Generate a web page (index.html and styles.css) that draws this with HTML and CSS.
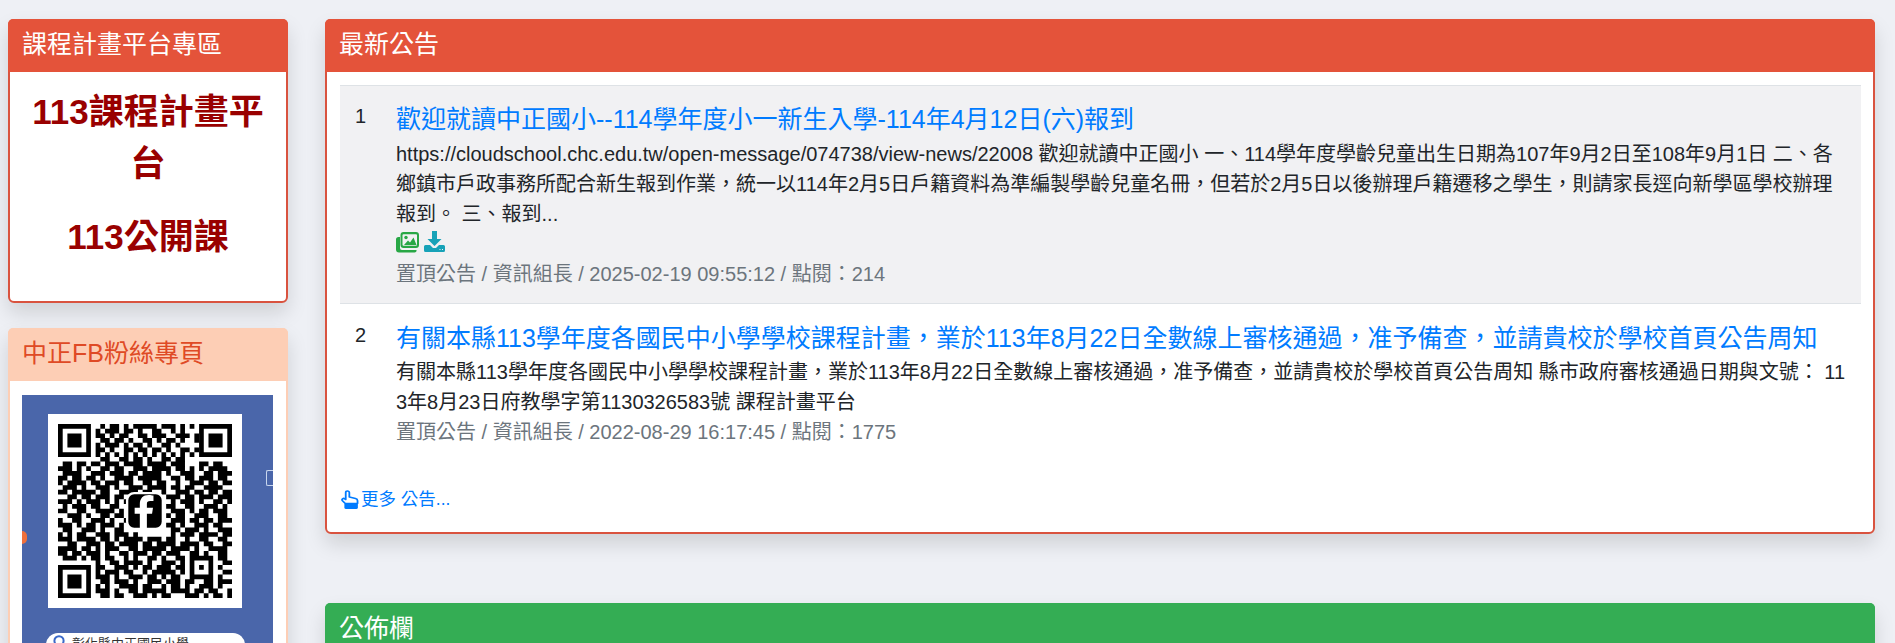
FILE: index.html
```html
<!DOCTYPE html>
<html lang="zh-Hant">
<head>
<meta charset="utf-8">
<title>中正國小</title>
<link rel="stylesheet" href="styles.css">
</head>
<body>
<div class="page">
  <aside class="sidebar">
    <section class="card card-red">
      <h2 class="card-head head-red">課程計畫平台專區</h2>
      <div class="promo">
        <p class="promo-line">113課程計畫平台</p>
        <p class="promo-line">113公開課</p>
      </div>
    </section>
    <section class="card card-peach">
      <h2 class="card-head head-peach">中正FB粉絲專頁</h2>
      <div class="poster-wrap">
        <div class="poster">
          <span class="edge-dot"></span>
          <span class="edge-box"></span>
          <div class="qr">
            <svg class="qr-code" viewBox="0 0 37 37" aria-hidden="true">
              <path fill="none" stroke="#000" d="M.5 .5h6v6h-6zM30.500 .5h6v6h-6zM.5 30.500h6v6h-6z"/>
              <path d="M2 2h3v3H2zM32 2h3v3h-3zM2 32h3v3H2z"/>
              <path fill="none" stroke="#000" d="M9 .5h1M11 .5h2M14 .5h1M16 .5h3M19 .5h2M22 .5h3M26 .5h1M28 .5h1M8 1.500h1M10 1.500h3M14 1.500h2M17 1.500h1M20 1.500h2M24 1.500h1M26 1.500h1M8 2.500h2M11 2.500h1M13 2.500h2M17 2.500h2M20 2.500h3M25 2.500h3M29 2.500h1M9 3.500h2M12 3.500h2M15 3.500h1M18 3.500h2M21 3.500h1M23 3.500h2M26 3.500h1M29 3.500h1M8 4.500h1M10 4.500h3M14 4.500h1M16 4.500h2M19 4.500h1M22 4.500h2M25 4.500h1M8 5.500h2M11 5.500h1M14 5.500h2M17 5.500h2M20 5.500h2M23 5.500h1M26 5.500h2M29 5.500h1M8 6.500h1M10 6.500h1M12 6.500h1M14 6.500h1M16 6.500h1M18 6.500h1M20 6.500h1M22 6.500h1M24 6.500h1M26 6.500h1M28 6.500h1M9 7.500h2M13 7.500h2M16 7.500h2M19 7.500h1M22 7.500h2M25 7.500h2M1 8.500h2M4 8.500h2M7 8.500h2M10 8.500h3M14 8.500h4M19 8.500h4M24 8.500h3M30 8.500h2M33 8.500h2M0 9.500h3M4 9.500h1M6 9.500h1M9 9.500h2M12 9.500h2M16 9.500h3M20 9.500h4M25 9.500h2M28 9.500h1M30 9.500h1M32 9.500h4M1 10.500h4M7 10.500h3M11 10.500h3M15 10.500h2M18 10.500h4M23 10.500h1M26 10.500h3M31 10.500h2M34 10.500h3M0 11.500h2M3 11.500h2M6 11.500h2M9 11.500h1M12 11.500h4M17 11.500h5M24 11.500h2M27 11.500h2M30 11.500h3M34 11.500h2M0 12.500h1M2 12.500h4M7 12.500h2M10 12.500h3M14 12.500h2M18 12.500h2M21 12.500h2M25 12.500h1M28 12.500h3M32 12.500h2M35 12.500h2M1 13.500h3M5 13.500h1M8 13.500h3M12 13.500h1M15 13.500h3M19 13.500h4M24 13.500h2M27 13.500h2M31 13.500h4M0 14.500h2M3 14.500h5M9 14.500h2M13 14.500h4M18 14.500h2M22 14.500h1M25 14.500h3M29 14.500h2M32 14.500h2M35 14.500h2M2 15.500h2M5 15.500h2M8 15.500h3M12 15.500h2M15 15.500h1M23 15.500h3M27 15.500h2M30 15.500h3M34 15.500h3M0 16.500h3M4 16.500h1M6 16.500h3M10 16.500h1M12 16.500h1M14 16.500h1M24 16.500h1M26 16.500h3M30 16.500h1M33 16.500h2M36 16.500h1M1 17.500h1M3 17.500h3M7 17.500h2M11 17.500h2M23 17.500h2M27 17.500h2M31 17.500h3M35 17.500h1M0 18.500h2M4 18.500h2M8 18.500h4M13 18.500h1M24 18.500h3M28 18.500h1M30 18.500h2M33 18.500h3M2 19.500h3M6 19.500h1M9 19.500h2M12 19.500h2M23 19.500h1M25 19.500h2M29 19.500h3M34 19.500h2M0 20.500h1M3 20.500h2M7 20.500h3M11 20.500h1M14 20.500h1M24 20.500h3M28 20.500h2M31 20.500h2M34 20.500h3M0 21.500h3M4 21.500h1M6 21.500h2M9 21.500h3M13 21.500h1M23 21.500h2M26 21.500h1M29 21.500h3M33 21.500h2M1 22.500h2M5 22.500h3M9 22.500h1M12 22.500h2M24 22.500h2M27 22.500h3M31 22.500h1M34 22.500h3M0 23.500h1M2 23.500h1M4 23.500h2M8 23.500h3M12 23.500h3M16 23.500h1M24 23.500h1M26 23.500h3M30 23.500h4M35 23.500h2M0 24.500h3M4 24.500h4M9 24.500h2M12 24.500h1M14 24.500h4M19 24.500h3M23 24.500h2M27 24.500h1M30 24.500h2M34 24.500h2M2 25.500h2M6 25.500h3M10 25.500h2M13 25.500h4M18 25.500h2M21 25.500h4M26 25.500h4M31 25.500h2M35 25.500h2M0 26.500h4M5 26.500h2M8 26.500h1M10 26.500h3M15 26.500h2M18 26.500h5M24 26.500h4M29 26.500h1M32 26.500h4M0 27.500h2M3 27.500h2M6 27.500h3M10 27.500h1M13 27.500h2M16 27.500h3M20 27.500h2M23 27.500h3M28 27.500h2M31 27.500h1M34 27.500h2M1 28.500h3M5 28.500h1M7 28.500h2M10 28.500h2M14 28.500h1M16 28.500h1M19 28.500h2M22 28.500h1M25 28.500h2M28 28.500h5M34 28.500h2M8 29.500h1M11 29.500h2M14 29.500h4M19 29.500h1M22 29.500h3M26 29.500h1M28 29.500h1M32 29.500h1M35 29.500h2M8 30.500h2M12 30.500h3M16 30.500h1M18 30.500h2M21 30.500h3M25 30.500h2M28 30.500h1M30 30.500h1M32 30.500h1M34 30.500h1M8 31.500h1M10 31.500h3M14 31.500h2M18 31.500h1M20 31.500h5M26 31.500h1M28 31.500h1M32 31.500h1M35 31.500h2M8 32.500h3M12 32.500h1M15 32.500h3M19 32.500h2M22 32.500h1M24 32.500h2M28 32.500h5M34 32.500h1M9 33.500h2M12 33.500h3M16 33.500h1M19 33.500h3M23 33.500h3M27 33.500h2M31 33.500h2M34 33.500h3M8 34.500h1M10 34.500h1M13 34.500h4M18 34.500h2M22 34.500h1M24 34.500h2M27 34.500h1M30 34.500h3M34 34.500h1M8 35.500h3M12 35.500h1M15 35.500h2M18 35.500h5M24 35.500h4M29 35.500h2M32 35.500h2M36 35.500h1M9 36.500h2M12 36.500h2M16 36.500h3M20 36.500h1M22 36.500h2M27 36.500h3M31 36.500h1M33 36.500h2M36 36.500h1"/>
              <rect x="14.700" y="14.700" width="7.600" height="7.600" rx="1.500" stroke="#fff" stroke-width=".5"/>
              <path fill="#fff" d="M18.900 22.300v-3.200h1.100l.2-1.300h-1.300v-.8c0-.4.200-.6.700-.6h.7v-1.200c-.3 0-.6-.1-1-.1-1.200 0-1.900.7-1.900 1.900v.8h-1.100v1.300h1.100v3.200z"/>
            </svg>
          </div>
          <div class="pill">
            <svg class="pin" viewBox="0 0 12 16" aria-hidden="true"><path fill="none" stroke="#3b69c8" stroke-width="2" d="M6 1.200a4.600 4.600 0 0 1 4.600 4.600C10.600 9 6 14 6 14S1.400 9 1.400 5.800A4.600 4.600 0 0 1 6 1.200z"/></svg>
            <span>彰化縣中正國民小學</span>
          </div>
        </div>
      </div>
    </section>
  </aside>

  <main class="content">
    <section class="card card-red card-news">
      <h2 class="card-head head-red">最新公告</h2>
      <div class="news-body">
        <ol class="news-list">
          <li class="news-item news-item-alt">
            <span class="news-num">1</span>
            <div class="news-main">
              <a class="news-title" href="#">歡迎就讀中正國小--114學年度小一新生入學-114年4月12日(六)報到</a>
              <p class="news-text">https://cloudschool.chc.edu.tw/open-message/074738/view-news/22008 歡迎就讀中正國小 一、114學年度學齡兒童出生日期為107年9月2日至108年9月1日 二、各鄉鎮市戶政事務所配合新生報到作業，統一以114年2月5日戶籍資料為準編製學齡兒童名冊，但若於2月5日以後辦理戶籍遷移之學生，則請家長逕向新學區學校辦理報到。 三、報到...</p>
              <div class="news-icons">
                <svg class="icon-images" viewBox="0 0 23 21" aria-hidden="true">
                  <path fill="#28a745" d="M2.500 5H4v11a2 2 0 0 0 2 2h14.500a2 2 0 0 1-2 2.500H3a3 3 0 0 1-3-3V7.500A2.500 2.500 0 0 1 2.500 5z"/>
                  <path fill="#28a745" fill-rule="evenodd" d="M7.500 0H20a3 3 0 0 1 3 3v10a3 3 0 0 1-3 3H7.500a3 3 0 0 1-3-3V3a3 3 0 0 1 3-3zm0 2.200a1 1 0 0 0-1 1v9.600a1 1 0 0 0 1 1H20a1 1 0 0 0 1-1V3.200a1 1 0 0 0-1-1z"/>
                  <circle cx="10" cy="5.500" r="1.700" fill="#28a745"/>
                  <path fill="#28a745" d="M8 13l4-4.500 2 2 3.500-5 3 7.500z"/>
                </svg>
                <svg class="icon-download" viewBox="0 0 21 21" aria-hidden="true">
                  <path fill="#17a2b8" d="M8 0h5v8h4.500L10.500 15 3.500 8H8z"/>
                  <path fill="#17a2b8" fill-rule="evenodd" d="M1.500 14H6l3 3h3l3-3h4.500A1.500 1.500 0 0 1 21 15.500v4a1.500 1.500 0 0 1-1.500 1.500h-18A1.500 1.500 0 0 1 0 19.500v-4A1.500 1.500 0 0 1 1.500 14zm14 4v1h1v-1zm2.500 0v1h1v-1z"/>
                </svg>
              </div>
              <div class="news-meta">置頂公告 / 資訊組長 / 2025-02-19 09:55:12 / 點閱：214</div>
            </div>
          </li>
          <li class="news-item news-item-next">
            <span class="news-num">2</span>
            <div class="news-main">
              <a class="news-title" href="#">有關本縣113學年度各國民中小學學校課程計畫，業於113年8月22日全數線上審核通過，准予備查，並請貴校於學校首頁公告周知</a>
              <p class="news-text">有關本縣113學年度各國民中小學學校課程計畫，業於113年8月22日全數線上審核通過，准予備查，並請貴校於學校首頁公告周知 縣市政府審核通過日期與文號： 113年8月23日府教學字第1130326583號 課程計畫平台</p>
              <div class="news-meta">置頂公告 / 資訊組長 / 2022-08-29 16:17:45 / 點閱：1775</div>
            </div>
          </li>
        </ol>
        <a class="more-link" href="#">
          <svg class="icon-hand" viewBox="0 0 16 19" preserveAspectRatio="none" aria-hidden="true">
            <path fill="none" stroke="#007bff" stroke-width="1.600" stroke-linejoin="round" d="M4.200 9.500V2.600a1.600 1.600 0 0 1 3.200 0V7l5.500 1.500c1 .3 1.800 1.200 1.800 2.300v2.700H3.800L1.300 10.700c-1.100-1.300.8-3 2-1.800z"/>
            <path fill="#007bff" d="M3 14h12v3.500a1.500 1.500 0 0 1-1.500 1.500h-9A1.500 1.500 0 0 1 3 17.500z"/>
          </svg>
          <span>更多 公告...</span>
        </a>
      </div>
    </section>
    <section class="card card-green">
      <h2 class="card-head head-green">公佈欄</h2>
    </section>
  </main>
</div>
</body>
</html>
```

FILE: styles.css
```css
* { box-sizing: border-box; }

html, body {
  margin: 0;
  height: 100%;
  overflow: hidden;
}

body {
  background: #eef0f5;
  color: #212529;
  font-family: "Liberation Sans", "Noto Sans CJK SC", sans-serif;
  font-size: 20px;
  line-height: 30px;
}

.page {
  display: flex;
  gap: 37px;
  padding: 19px 20px 0 8px;
}

.sidebar {
  flex: 0 0 280px;
  display: flex;
  flex-direction: column;
  gap: 25px;
}

.content {
  flex: 1 1 0;
  min-width: 0;
  display: flex;
  flex-direction: column;
  gap: 69px;
}

.card {
  background: #fff;
  border: 2px solid;
  border-radius: 6px;
  box-shadow: 0 10px 20px rgba(0, 0, 0, .13);
}

.card-red { border-color: #d9533f; }
.card-peach { border-color: #fdceb5; }
.card-green { border-color: #34ad54; }

.card-head {
  margin: -2px -2px 0;
  padding: 7px 14px 8.500px;
  border-radius: 5px 5px 0 0;
  font-size: 25px;
  font-weight: 400;
  line-height: 37.500px;
}

.head-red { background: #e4533a; color: #fff; }
.head-peach { background: #fdceb5; color: #df4a25; }
.head-green { background: #34ad54; color: #fff; }

.promo {
  padding: 14px 12px 18px;
  text-align: center;
}

.promo-line {
  margin: 0 0 20.500px;
  color: #990000;
  font-size: 35px;
  font-weight: 700;
  line-height: 52px;
}

.poster-wrap { padding: 14px 13px 0 12px; }

.poster {
  position: relative;
  height: 280px;
  padding: 19px 28px 0 24px;
  background: #4a66aa;
}

.edge-dot {
  position: absolute;
  left: 0;
  top: 136px;
  width: 5px;
  height: 13px;
  background: #f0703c;
  border-radius: 0 6px 6px 0;
}

.edge-box {
  position: absolute;
  right: 0;
  top: 75px;
  width: 7px;
  height: 16px;
  border: 1px solid #c8d6ee;
  border-right: 0;
  border-radius: 2px 0 0 2px;
}

.qr {
  width: 194px;
  height: 194px;
  margin-left: 2px;
  padding: 10px;
  background: #fff;
}

.qr-code { display: block; width: 174px; height: 174px; }

.pill {
  display: flex;
  align-items: flex-start;
  gap: 7px;
  width: 199px;
  height: 40px;
  margin-top: 25px;
  padding: 1px 7px;
  background: #fff;
  border-radius: 12px;
  color: #333;
  font-size: 13px;
  line-height: 20px;
}

.pin { flex: none; width: 12px; height: 16px; margin-top: 1px; }

.news-body { padding: 13px 12px 20px 13px; }

.news-list {
  margin: 0 0 24px;
  padding: 0;
  list-style: none;
}

.news-item {
  display: flex;
  padding: 15px;
  border-top: 1px solid #dee2e6;
}

.news-item-alt { background: #f1f1f3; padding-bottom: 14.500px; }
.news-item-next { padding-top: 15.500px; }

.news-num { flex: 0 0 41px; }

.news-main {
  flex: 1 1 0;
  min-width: 0;
}

.news-title {
  display: block;
  color: #007bff;
  font-size: 25px;
  line-height: 37.500px;
  text-decoration: none;
}

.news-text {
  margin: 0;
  word-break: break-all;
}

.news-icons {
  display: flex;
  align-items: center;
  gap: 5px;
  height: 30px;
  padding-bottom: 2px;
}

.icon-images { width: 23px; height: 21px; }
.icon-download { width: 21px; height: 21px; margin-bottom: 2px; }

.news-meta { color: #6c757d; }

.more-link {
  display: flex;
  align-items: center;
  gap: 2px;
  color: #007bff;
  font-size: 17.500px;
  line-height: 26px;
  text-decoration: none;
}

.icon-hand { width: 18px; height: 19px; margin-left: 1px; }
```
